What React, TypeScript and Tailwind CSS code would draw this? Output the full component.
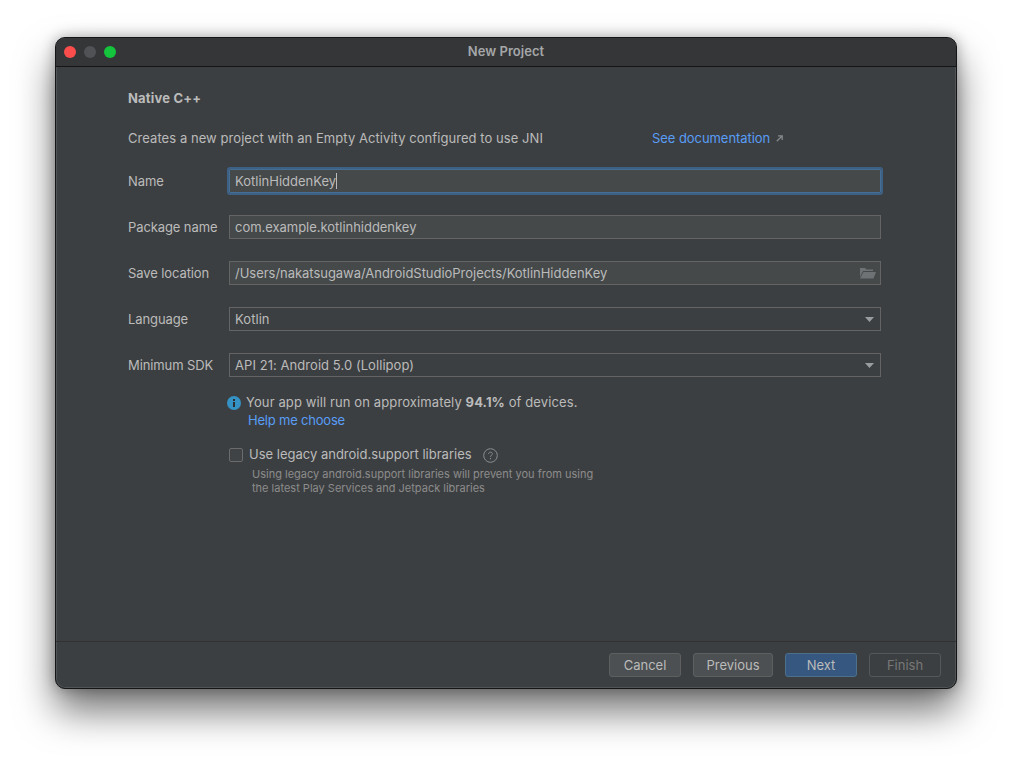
const FONT = 'font-["Inter","Liberation_Sans",sans-serif]';

const Caret = () => (
  <svg width="9" height="5" viewBox="0 0 9 5" aria-hidden="true">
    <path d="M0 0h9L4.500 5z" fill="#9a9d9f" />
  </svg>
);

const FolderIcon = () => (
  <svg width="16" height="12" viewBox="0 0 16 12" aria-hidden="true">
    <path d="M0 1h5l1.500 1.500H13V4H3L0 10z" fill="#6e7274" />
    <path d="M3.500 5H16l-2.500 6.500H0z" fill="#6e7274" />
  </svg>
);

const ArrowIcon = () => (
  <svg width="7" height="7" viewBox="0 0 7 7" fill="none" aria-hidden="true">
    <path d="M2 .8h4.200V5M6 1L.8 6.200" stroke="#85898b" strokeWidth="1.300" />
  </svg>
);

const InfoIcon = () => (
  <svg width="14" height="14" viewBox="0 0 14 14" aria-hidden="true">
    <circle cx="7" cy="7" r="7" fill="#3592c4" />
    <rect x="6" y="6" width="2" height="5" fill="#2b2d2e" />
    <rect x="6" y="3" width="2" height="2" fill="#2b2d2e" />
  </svg>
);

const HelpIcon = () => (
  <svg width="15" height="15" viewBox="0 0 15 15" fill="none" aria-hidden="true">
    <circle cx="7.500" cy="7.500" r="6.800" stroke="#8a8d8f" />
    <path d="M5.600 5.900c0-1.100.9-1.800 1.900-1.800s1.900.7 1.900 1.700c0 1.400-1.900 1.500-1.900 3" stroke="#8a8d8f" />
    <rect x="7" y="10" width="1" height="1.200" fill="#8a8d8f" />
  </svg>
);

function Row({ label, children }: { label: string; children: React.ReactNode }) {
  return (
    <div className="flex h-6 items-center">
      <span className="w-[101px] shrink-0 pt-px text-[13px] tracking-[-0.1px] text-[#bbbbbb]">{label}</span>
      {children}
    </div>
  );
}

function Field({ value, icon }: { value: string; icon?: React.ReactNode }) {
  return (
    <div className="flex h-6 w-[652px] items-center justify-between border border-[#646464] bg-[#45494a] pl-[5px] pr-[4px] text-[13px] text-[#bbbbbb]">
      <span className="pt-px tracking-[-0.03px]">{value}</span>
      {icon}
    </div>
  );
}

function Select({ value }: { value: string }) {
  return (
    <div className="flex h-6 w-[652px] items-center justify-between border border-[#646464] bg-[#3c3f41] pl-[5px] pr-[6px] text-[13px] text-[#bbbbbb]">
      <span className="pt-px tracking-[0.06px]">{value}</span>
      <Caret />
    </div>
  );
}

function Button({ label, className }: { label: string; className: string }) {
  return (
    <button
      type="button"
      className={`flex h-6 items-center justify-center rounded-[3px] border pt-px text-[13px] ${className}`}
    >
      {label}
    </button>
  );
}

export default function App() {
  return (
    <div className={`h-[762px] w-[1012px] overflow-hidden bg-white pl-[55px] pt-[37px] ${FONT}`}>
      <div className="flex h-[652px] w-[902px] flex-col overflow-hidden rounded-[10px] border border-[#141516] bg-[#3c3f41] shadow-[inset_0_0_0_1px_#515456,0_22px_38px_rgba(0,0,0,0.55),0_0_14px_rgba(0,0,0,0.3)]">
        <div className="relative flex h-[29px] shrink-0 items-center justify-center border-b border-[#141516] bg-[#343638]">
          <div className="absolute left-[8px] top-[8px] flex gap-2">
            <span className="h-3 w-3 rounded-full bg-[#fc4d4d]" />
            <span className="h-3 w-3 rounded-full bg-[#505256]" />
            <span className="h-3 w-3 rounded-full bg-[#14c43c]" />
          </div>
          <span className="text-[13px] font-semibold tracking-[0.05px] text-[#a5a7a8]">New Project</span>
        </div>

        <div className="flex flex-1 flex-col pl-[72px]">
          <h1 className="mt-[23px] h-4 text-[13px] leading-4 font-bold tracking-[0.2px] text-[#bbbbbb]">Native C++</h1>
          <div className="mt-[24px] flex h-4 items-center text-[13px] leading-4 text-[#bbbbbb]">
            <span className="w-[524px] tracking-[0.06px]">Creates a new project with an Empty Activity configured to use JNI</span>
            <span className="tracking-[-0.06px] text-[#589df6]">See documentation</span>
            <span className="ml-[6px]"><ArrowIcon /></span>
          </div>

          <div className="mt-[23px] flex flex-col gap-[22px]">
            <Row label="Name">
              <div className="flex h-6 w-[652px] items-center rounded-[1px] border border-[#466d94] bg-[#45494a] pl-[5px] text-[13px] text-[#bbbbbb] outline-2 outline-[#3d6185]">
                <span className="pt-px">KotlinHiddenKey</span>
                <span className="h-4 w-px bg-[#bbbbbb]" />
              </div>
            </Row>
            <Row label="Package name">
              <Field value="com.example.kotlinhiddenkey" />
            </Row>
            <Row label="Save location">
              <Field value="/Users/nakatsugawa/AndroidStudioProjects/KotlinHiddenKey" icon={<FolderIcon />} />
            </Row>
            <Row label="Language">
              <Select value="Kotlin" />
            </Row>
            <Row label="Minimum SDK">
              <Select value="API 21: Android 5.0 (Lollipop)" />
            </Row>
          </div>

          <div className="ml-[99px] mt-[17px] flex h-[17px] items-center gap-[5px] text-[13px] tracking-[0.11px] text-[#bbbbbb]">
            <InfoIcon />
            <span>
              Your app will run on approximately <b className="font-bold">94.1%</b> of devices.
            </span>
          </div>
          <div className="ml-[120px] h-[18px] text-[13px] leading-[18px] tracking-[-0.2px] text-[#589df6]">Help me choose</div>

          <div className="ml-[101px] mt-[17px] flex h-[18px] items-center">
            <span className="h-[14px] w-[14px] rounded-[2px] border border-[#6b6b6b] bg-[#3f4345]" />
            <span className="ml-[6px] text-[13px] text-[#bbbbbb]">Use legacy android.support libraries</span>
            <span className="ml-[11px]"><HelpIcon /></span>
          </div>
          <div className="ml-[124px] mt-[3px] text-[11px] leading-[14px] text-[#8c8c8c]">
            <div>Using legacy android.support libraries will prevent you from using</div>
            <div>the latest Play Services and Jetpack libraries</div>
          </div>
        </div>

        <div className="flex h-[47px] shrink-0 items-start justify-end gap-3 border-t border-[#323232] pr-[15px] pt-[11px]">
          <Button label="Cancel" className="w-[72px] border-[#5e6060] bg-[#4c5052] text-[#bbbbbb]" />
          <Button label="Previous" className="w-[80px] border-[#5e6060] bg-[#4c5052] text-[#bbbbbb]" />
          <Button label="Next" className="w-[72px] border-[#4c708c] bg-[#365880] text-[#bbbbbb]" />
          <Button label="Finish" className="w-[72px] border-[#55585a] bg-[#3c3f41] text-[#777777]" />
        </div>
      </div>
    </div>
  );
}
